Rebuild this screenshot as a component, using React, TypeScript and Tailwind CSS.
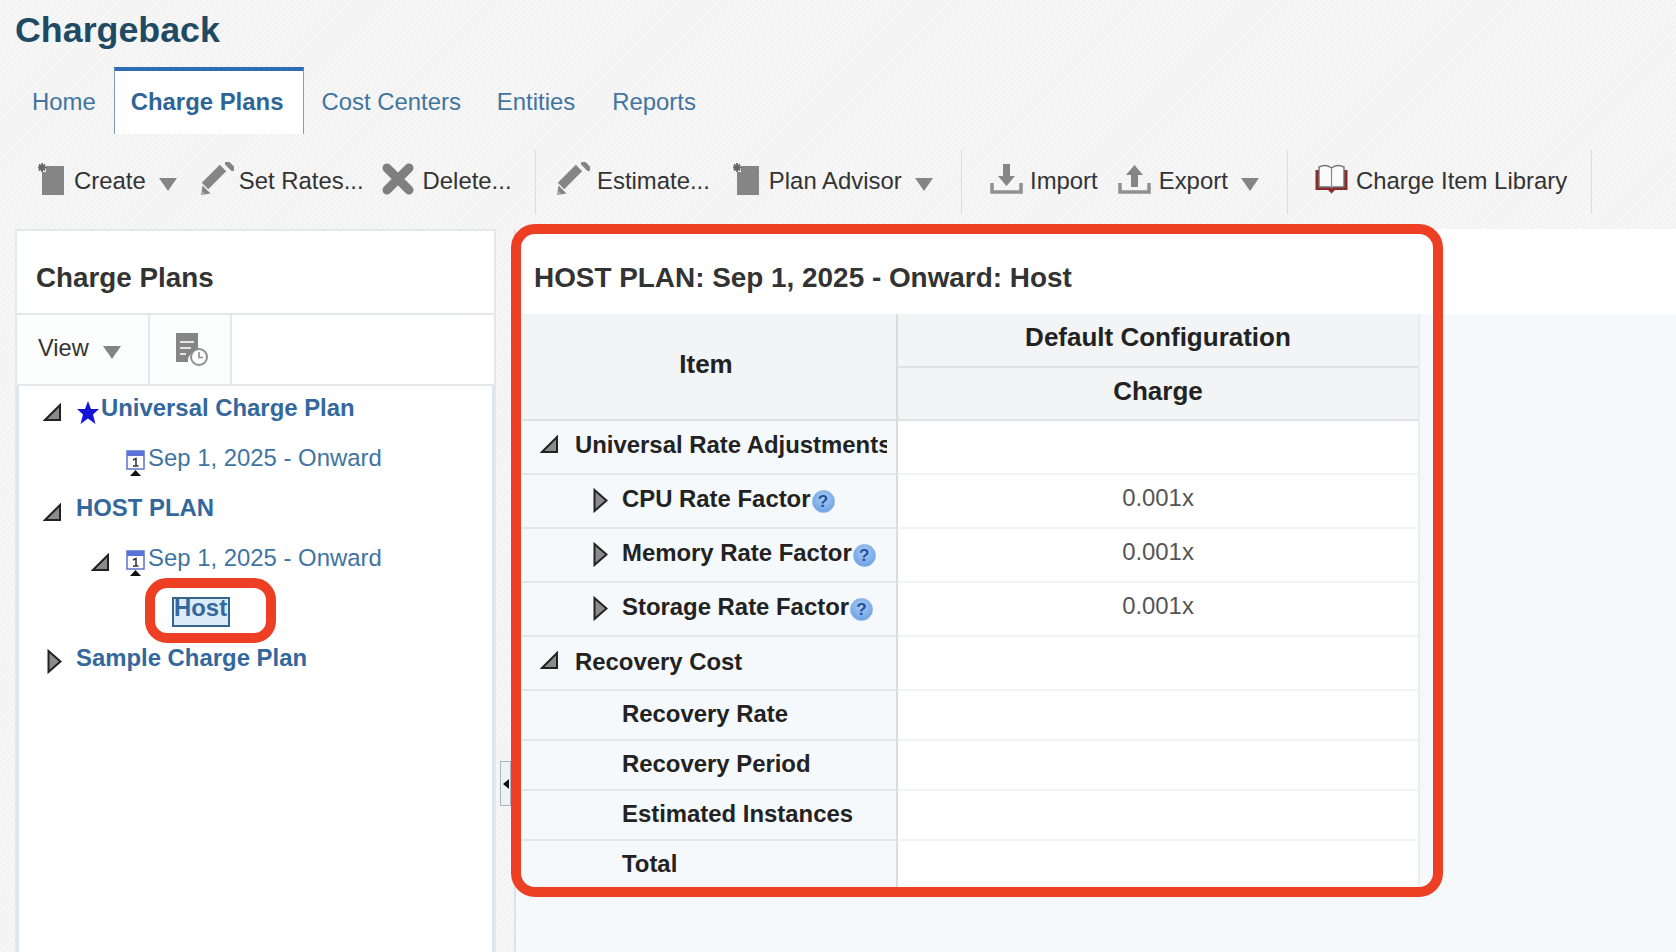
import React from "react";

const Caret = ({ className = "" }: { className?: string }) => (
  <svg width="18" height="13" viewBox="0 0 18 13" className={className}>
    <path d="M0 0H18L9 13Z" fill="#858585" />
  </svg>
);
const Create = ({ className = "" }: { className?: string }) => (
  <svg width="28" height="34" viewBox="0 0 28 34" className={className}>
    <path d="M9 4H27V33H5V10H9Z" fill="#858585" />
    <path d="M5 1V10M1 5.500H9.500M2 2.500L8 8.500M8 2.500L2 8.500" stroke="#666" strokeWidth="1.800" />
  </svg>
);
const Pencil = ({ className = "" }: { className?: string }) => (
  <svg width="34" height="34" viewBox="0 0 34 34" className={className}>
    <path d="M5 24L23 6" stroke="#858585" strokeWidth="9" />
    <path d="M27.500 1.500L32.500 6.500" stroke="#858585" strokeWidth="5" strokeLinecap="round" />
    <path d="M1 33L2.500 23.500L10.500 31.500Z" fill="#858585" />
    <path d="M1.500 32.500L2 29L5 32Z" fill="#b5b5b5" />
  </svg>
);
const Cross = ({ className = "" }: { className?: string }) => (
  <svg width="34" height="34" viewBox="0 0 34 34" className={className}>
    <path d="M6 6L28 28M28 6L6 28" stroke="#7f7f7f" strokeWidth="9" strokeLinecap="round" />
  </svg>
);
const Transfer = ({ up, className = "" }: { up?: boolean; className?: string }) => (
  <svg width="33" height="34" viewBox="0 0 33 34" className={className}>
    <path d="M2 21V30H31V21" fill="none" stroke="#909090" strokeWidth="3.500" />
    {up ? <path d="M16.500 3L25 13H20V25H13V13H8Z" fill="#858585" /> : <path d="M13 2H20V14H25L16.500 24L8 14H13Z" fill="#858585" />}
  </svg>
);
const Book = ({ className = "" }: { className?: string }) => (
  <svg width="33" height="30" viewBox="0 0 33 30" className={className}>
    <path d="M1.500 6V25H13.500L16.500 28L19.500 25H31.500V6" fill="#8c2a2a" stroke="#8c2a2a" strokeWidth="2" />
    <path d="M4 3C8 1 13 1 16.500 4C20 1 25 1 29 3V23H18L16.500 24L15 23H4Z" fill="#fafafa" stroke="#707070" strokeWidth="1.400" />
    <path d="M16.500 4V23" stroke="#888" strokeWidth="1.200" />
  </svg>
);
const Expanded = ({ className = "" }: { className?: string }) => (
  <svg width="19" height="19" viewBox="0 0 19 19" className={className}>
    <path d="M17 2V17H2Z" fill="#8b8b8b" stroke="#222" strokeWidth="2" />
  </svg>
);
const Collapsed = ({ className = "" }: { className?: string }) => (
  <svg width="15" height="25" viewBox="0 0 15 25" className={className}>
    <path d="M1.500 2L13.500 12.500L1.500 23Z" fill="#8b8b8b" stroke="#222" strokeWidth="2" />
  </svg>
);
const Star = ({ className = "" }: { className?: string }) => (
  <svg width="22" height="23" viewBox="0 0 22 23" className={className}>
    <path d="M11 0L14 8H22L16 13.500L18.500 23L11 17.500L3.500 23L6 13.500L0 8H8Z" fill="#1414d6" />
  </svg>
);
const Calendar = ({ className = "" }: { className?: string }) => (
  <svg width="19" height="26" viewBox="0 0 19 26" className={className}>
    <rect x="1" y="1" width="17" height="18" fill="#fff" stroke="#5b73c9" strokeWidth="1.500" />
    <rect x="1" y="1" width="17" height="5" fill="#5b73d9" />
    <path d="M7 10L10 8.500V16M7 16H12.500" fill="none" stroke="#333" strokeWidth="1.500" />
    <path d="M9.500 20L15 26H4Z" fill="#111" />
  </svg>
);
const Schedule = () => (
  <svg width="32" height="33" viewBox="0 0 32 33">
    <path d="M0 0H22V18A10 10 0 0 0 12 29H0Z" fill="#858585" />
    <path d="M4 9H18M4 15H15M4 21H10" stroke="#e4e4e4" strokeWidth="2" />
    <circle cx="23" cy="24" r="8" fill="#fff" stroke="#8f8f8f" strokeWidth="2" />
    <path d="M23 19V24.500H27" fill="none" stroke="#8f8f8f" strokeWidth="1.600" />
  </svg>
);
const Help = () => (
  <span className="w-[23px] h-[23px] ml-[1px] rounded-full bg-[radial-gradient(circle_at_50%_35%,#a9cdf5,#5f97e0)] border border-[#8fb4e2] text-[#1f4f9c] text-[17px] leading-[21px] font-bold text-center mt-[15px] shrink-0">?</span>
);

export default function App() {
  return (
    <div className="relative h-[952px] overflow-hidden font-['Liberation_Sans',Arial,sans-serif] bg-[repeating-linear-gradient(135deg,#f7f7f7_0px,#f7f7f7_2px,#f2f2f2_2px,#f2f2f2_4px)]">
      <div className="h-[67px] pl-[15px] text-[35.800px] leading-[60px] font-bold text-[#1f4a63]">Chargeback</div>

      <div className="h-[67px] flex pl-[15px] text-[23.900px] leading-[63px] text-[#41749f]">
        <div className="pl-[17px] pr-[18px] pt-[3px]">Home</div>
        <div className="pl-[16px] pr-[20px] pt-[3px] bg-white border-t-4 border-x border-t-[#2c6db4] border-x-[#7f9db9] font-bold text-[#2f6596] leading-[56px]">Charge Plans</div>
        <div className="px-[17px] pt-[3px]">Cost Centers</div>
        <div className="px-[19px] pt-[3px]">Entities</div>
        <div className="px-[18px] pt-[3px]">Reports</div>
      </div>

      <div className="h-[95px] pt-[16px] flex text-[23.900px] text-[#333]">
        <div className="h-[64px] flex items-center pb-[6px] pl-[37px] w-[536px] border-r border-[#dcdcdc] shrink-0">
          <Create /><span className="ml-[9px] mt-[4px]">Create</span><Caret className="ml-[13px] mt-[10px]" />
          <Pencil className="ml-[23px]" /><span className="ml-[5px] mt-[4px]">Set Rates...</span>
          <Cross className="ml-[17px]" /><span className="ml-[8px] mt-[4px]">Delete...</span>
        </div>
        <div className="h-[64px] flex items-center pb-[6px] pl-[20px] w-[426px] border-r border-[#dcdcdc] shrink-0">
          <Pencil /><span className="ml-[7px] mt-[4px]">Estimate...</span>
          <Create className="ml-[22px]" /><span className="ml-[9px] mt-[4px]">Plan Advisor</span><Caret className="ml-[13px] mt-[10px]" />
        </div>
        <div className="h-[64px] flex items-center pb-[6px] pl-[28px] w-[326px] border-r border-[#dcdcdc] shrink-0">
          <Transfer /><span className="ml-[7px] mt-[4px]">Import</span>
          <Transfer up className="ml-[20px]" /><span className="ml-[8px] mt-[4px]">Export</span><Caret className="ml-[13px] mt-[10px]" />
        </div>
        <div className="h-[64px] flex items-center pb-[6px] pl-[27px] w-[304px] border-r border-[#dcdcdc] shrink-0">
          <Book /><span className="ml-[8px] mt-[4px]">Charge Item Library</span>
        </div>
      </div>

      <div className="h-[723px] flex">
        <div className="ml-[15px] w-[481px] shrink-0 bg-white border-2 border-b-0 border-[#e2e8ec] flex flex-col">
          <div className="h-[84px] pl-[19px] pt-[17px] text-[27.800px] leading-[60px] font-bold text-[#333] border-b-2 border-[#e2e8ec]">Charge Plans</div>
          <div className="h-[71px] flex border-b-2 border-[#e2e8ec]">
            <div className="w-[133px] pl-[21px] pb-[2px] flex items-center text-[23.600px] text-[#333] border-r-2 border-[#e2e8ec] bg-[#fcfdfd]">
              View<Caret className="ml-[14px] mt-[8px]" />
            </div>
            <div className="w-[82px] pl-[26px] pt-[18px] border-r-2 border-[#e2e8ec] bg-[#fcfdfd]"><Schedule /></div>
          </div>
          <div className="flex-1 text-[23.900px] leading-[50px] text-[#3f74a3] border-l-2 border-r-2 border-[#dde5ee]">
            <div className="-mt-[3px]">
              <div className="h-[50px] flex font-bold text-[#33689c] pl-[24px]">
                <Expanded className="mt-[20px] shrink-0" /><Star className="ml-[15px] mt-[18px] shrink-0" /><span className="ml-[2px]">Universal Charge Plan</span>
              </div>
              <div className="h-[50px] flex pl-[107px]">
                <Calendar className="mt-[17px] shrink-0" /><span className="ml-[3px]">Sep 1, 2025 - Onward</span>
              </div>
              <div className="h-[50px] flex font-bold text-[#33689c] pl-[24px]">
                <Expanded className="mt-[20px] shrink-0" /><span className="ml-[14px]">HOST PLAN</span>
              </div>
              <div className="h-[50px] flex pl-[72px]">
                <Expanded className="mt-[20px] shrink-0" /><Calendar className="ml-[16px] mt-[17px] shrink-0" /><span className="ml-[3px]">Sep 1, 2025 - Onward</span>
              </div>
              <div className="h-[50px] flex pl-[153px] pt-[14px]">
                <span className="h-[30px] w-[58px] border-2 border-[#36648f] bg-[#dcebf8] font-bold text-[#33689c] leading-[18px]">Host</span>
              </div>
              <div className="h-[50px] flex font-bold text-[#33689c] pl-[28px]">
                <Collapsed className="mt-[16px] shrink-0" /><span className="ml-[14px]">Sample Charge Plan</span>
              </div>
            </div>
          </div>
        </div>

        <div className="w-[18px] shrink-0 pt-[532px] pl-[4px]">
          <div className="w-[11px] h-[45px] bg-[#eef2f5] border border-[#a9b4bd] flex items-center justify-center">
            <svg width="6" height="10" viewBox="0 0 6 10"><path d="M6 0V10L0 5Z" fill="#111" /></svg>
          </div>
        </div>

        <div className="flex-1 bg-[#f6f9fb] border-l-2 border-[#dfe3e6] flex flex-col">
          <div className="h-[85px] bg-white pl-[18px] pt-[19px] text-[27.900px] leading-[60px] font-bold text-[#333] shrink-0">HOST PLAN: Sep 1, 2025 - Onward: Host</div>
          <div className="ml-[6px] w-[898px] text-[23.900px] font-bold text-[#222] border-r-2 border-[#e8edf0]">
            <div className="flex h-[107px] bg-[#f2f4f5] border-b-2 border-[#dfe2e4] text-[26px]">
              <div className="w-[376px] flex items-center justify-center pb-[4px] pr-[6px] border-r-2 border-[#d8dcdf]">Item</div>
              <div className="flex-1 flex flex-col text-center">
                <div className="h-[54px] leading-[46px] border-b-2 border-[#dfe2e4]">Default Configuration</div>
                <div className="flex-1 leading-[47px]">Charge</div>
              </div>
            </div>
            {[
              ["Universal Rate Adjustments", "e", "", "h-[54px]", "leading-[48px]"],
              ["CPU Rate Factor", "c", "0.001x", "h-[54px]", "leading-[48px]"],
              ["Memory Rate Factor", "c", "0.001x", "h-[54px]", "leading-[48px]"],
              ["Storage Rate Factor", "c", "0.001x", "h-[54px]", "leading-[48px]"],
              ["Recovery Cost", "e", "", "h-[54px]", "leading-[50px]"],
              ["Recovery Rate", "n", "", "h-[50px]", "leading-[46px]"],
              ["Recovery Period", "n", "", "h-[50px]", "leading-[46px]"],
              ["Estimated Instances", "n", "", "h-[50px]", "leading-[46px]"],
              ["Total", "n", "", "h-[50px]", "leading-[46px]"],
            ].map(([label, kind, value, h, lead]) => (
              <div key={label} className={`flex ${h} ${lead} bg-white`}>
                <div className="w-[376px] shrink-0 flex bg-[#f6f9fb] border-r-2 border-r-[#d8dcdf] border-b-2 border-b-[#e3e7ea] overflow-hidden">
                  {kind === "e" && (
                    <div className="flex pl-[18px] w-[365px] overflow-hidden whitespace-nowrap">
                      <Expanded className="mt-[14px] shrink-0" /><span className="ml-[16px]">{label}</span>
                    </div>
                  )}
                  {kind === "c" && (
                    <div className="flex pl-[71px] whitespace-nowrap">
                      <Collapsed className="mt-[13px] shrink-0" /><span className="ml-[14px]">{label}</span><Help />
                    </div>
                  )}
                  {kind === "n" && <span className="pl-[100px]">{label}</span>}
                </div>
                <div className="flex-1 text-center font-normal text-[#555] border-b-2 border-[#f1f3f5]"><span className="block -mt-px">{value}</span></div>
              </div>
            ))}
          </div>
        </div>
      </div>

      <div className="absolute left-[511px] top-[224px] w-[932px] h-[673px] border-[10px] border-[#ec3f24] rounded-[24px]" />
      <div className="absolute left-[145px] top-[578px] w-[131px] h-[65px] border-[10px] border-[#ec3f24] rounded-[22px]" />
    </div>
  );
}
